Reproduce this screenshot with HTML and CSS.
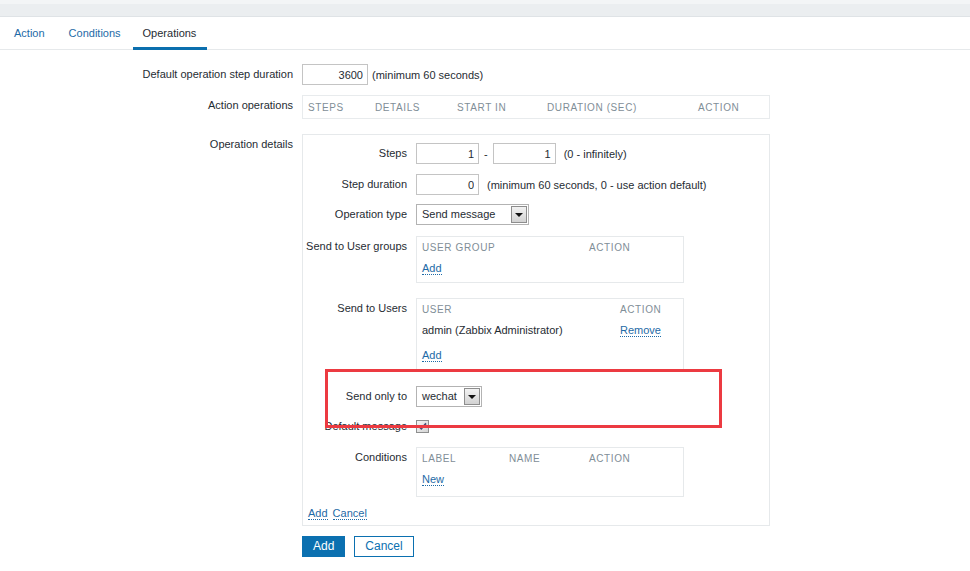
FILE: index.html
```html
<!DOCTYPE html>
<html>
<head>
<meta charset="utf-8">
<title>Operations</title>
<link rel="stylesheet" href="styles.css">
</head>
<body>
<div class="topbar"></div>
<div class="page">
  <ul class="tabs">
    <li class="tab">Action</li>
    <li class="tab">Conditions</li>
    <li class="tab active">Operations</li>
  </ul>

  <div class="form">
    <div class="frow">
      <div class="flabel">Default operation step duration</div>
      <div class="field">
        <input class="inp w66" type="text" value="3600">
        <span class="hint">(minimum 60 seconds)</span>
      </div>
    </div>

    <div class="frow mt10">
      <div class="flabel">Action operations</div>
      <div class="opsbox">
        <div class="thead cols-ops">
          <span>STEPS</span><span>DETAILS</span><span>START IN</span><span>DURATION (SEC)</span><span>ACTION</span>
        </div>
      </div>
    </div>

    <div class="frow mt15">
      <div class="flabel">Operation details</div>
      <div class="dbox">
        <div class="igrid">
          <div class="ilabel">Steps</div>
          <div class="field">
            <input class="inp w63" type="text" value="1"><span class="dash">-</span><input class="inp w63" type="text" value="1"><span class="hint in">(0 - infinitely)</span>
          </div>

          <div class="ilabel mt10">Step duration</div>
          <div class="field mt10">
            <input class="inp w63" type="text" value="0"><span class="hint in">(minimum 60 seconds, 0 - use action default)</span>
          </div>

          <div class="ilabel mt9">Operation type</div>
          <div class="field mt9">
            <div class="select w113"><span class="sel-text">Send message</span><span class="sel-btn"><span class="tri"></span></span></div>
          </div>

          <div class="ilabel mt11">Send to User groups</div>
          <div class="field mt11">
            <div class="ibox">
              <div class="thead cols-groups"><span>USER GROUP</span><span>ACTION</span></div>
              <div class="trow"><a class="lnk" href="#">Add</a></div>
            </div>
          </div>

          <div class="ilabel mt15">Send to Users</div>
          <div class="field mt15">
            <div class="ibox">
              <div class="thead cols-users"><span>USER</span><span>ACTION</span></div>
              <div class="trow data cols-users"><span>admin (Zabbix Administrator)</span><span><a class="lnk" href="#">Remove</a></span></div>
              <div class="trow"><a class="lnk" href="#">Add</a></div>
            </div>
          </div>

          <div class="ilabel mt16">Send only to</div>
          <div class="field mt16">
            <div class="select w66s"><span class="sel-text">wechat</span><span class="sel-btn"><span class="tri"></span></span></div>
          </div>

          <div class="ilabel mt9">Default message</div>
          <div class="field mt9">
            <svg class="chk" width="13" height="13" viewBox="0 0 13 13">
              <defs>
                <linearGradient id="cg" x1="0" y1="0" x2="1" y2="1">
                  <stop offset="0" stop-color="#f6f6f6"/>
                  <stop offset="1" stop-color="#d3d3d3"/>
                </linearGradient>
              </defs>
              <rect x="0.5" y="0.5" width="12" height="12" fill="url(#cg)" stroke="#8e8f8f"/>
              <path d="M3 6.3 L5.3 8.8 L10 3.4" fill="none" stroke="#4b4b73" stroke-width="1.7"/>
            </svg>
          </div>

          <div class="ilabel mt10">Conditions</div>
          <div class="field mt10">
            <div class="ibox tall">
              <div class="thead cols-cond"><span>LABEL</span><span>NAME</span><span>ACTION</span></div>
              <div class="trow"><a class="lnk" href="#">New</a></div>
            </div>
          </div>

          <div class="links mt6"><a class="lnk" href="#">Add</a><a class="lnk gap" href="#">Cancel</a></div>
        </div>
      </div>
    </div>

    <div class="frow mt10">
      <div></div>
      <div class="buttons">
        <button class="btn primary">Add</button>
        <button class="btn secondary">Cancel</button>
      </div>
    </div>
  </div>

  <div class="annot"></div>
</div>
</body>
</html>
```

FILE: styles.css
```css
html, body {
  margin: 0;
  padding: 0;
  background: #ffffff;
}
body {
  font-family: "Liberation Sans", Arial, sans-serif;
  font-size: 11px;
  color: #1f2c33;
  position: relative;
  height: 571px;
  overflow: hidden;
}

.topbar {
  height: 12px;
  background: #ebeef0;
  border-top: 4px solid #f3f5f6;
  border-bottom: 1px solid #dfe3e6;
}

.page {
  background: #ffffff;
}

.tabs {
  list-style: none;
  margin: 0;
  padding: 0 0 0 2px;
  display: flex;
  align-items: flex-start;
  height: 32px;
  border-bottom: 1px solid #e6e9eb;
}
.tab {
  box-sizing: border-box;
  height: 33px;
  margin-bottom: -1px;
  padding: 2px 12px 0;
  line-height: 29px;
  color: #1e6aa6;
  border-bottom: 3px solid transparent;
  font-size: 11px;
}
.tab.active {
  color: #1f2c33;
  border-bottom-color: #0b6fae;
  padding: 2px 11px 0 10px;
}

.form {
  padding-top: 14px;
}
.frow {
  display: grid;
  grid-template-columns: 293px 468px;
  column-gap: 9px;
  align-items: start;
}
.flabel {
  line-height: 21px;
  text-align: right;
  white-space: nowrap;
}
.mt6 { margin-top: 6px; }
.mt9 { margin-top: 9px; }
.mt10 { margin-top: 10px; }
.mt11 { margin-top: 11px; }
.mt15 { margin-top: 15px; }
.mt16 { margin-top: 16px; }

.field {
  display: flex;
  align-items: center;
  min-height: 21px;
  white-space: nowrap;
}

.inp {
  box-sizing: border-box;
  height: 21px;
  border: 1px solid #c4c4c4;
  padding: 0 4px 0 2px;
  margin: 0;
  font-family: "Liberation Sans", Arial, sans-serif;
  font-size: 11px;
  color: #1f2c33;
  text-align: right;
  background: #fff;
  outline: none;
}
.w66 { width: 66px; }
.w63 { width: 63px; }

.hint { margin-left: 4px; }
.hint.in { margin-left: 8px; }
.dash { margin: 0 5px; }

.opsbox {
  box-sizing: border-box;
  border: 1px solid #e8ebed;
  padding: 2px 5px 0;
}
.thead {
  display: grid;
  line-height: 20px;
  height: 20px;
  font-size: 10px;
  letter-spacing: 0.6px;
  color: #7f8e97;
  white-space: nowrap;
}
.cols-ops { grid-template-columns: 67px 82px 90px 151px auto; }
.cols-groups { grid-template-columns: 167px auto; }
.cols-users { grid-template-columns: 198px auto; }
.cols-cond { grid-template-columns: 87px 80px auto; }

.dbox {
  box-sizing: border-box;
  border: 1px solid #e6e9eb;
  padding: 8px 5px 1px 5px;
}
.igrid {
  display: grid;
  grid-template-columns: 99px 1fr;
  column-gap: 9px;
  align-items: start;
}
.ilabel {
  line-height: 21px;
  display: flex;
  justify-content: flex-end;
  white-space: nowrap;
}

.ibox {
  box-sizing: border-box;
  width: 268px;
  border: 1px solid #e6e9eb;
  padding: 1px 5px 4px 5px;
}
.ibox.tall { padding-bottom: 7px; }
.trow {
  line-height: 20px;
  height: 20px;
  white-space: nowrap;
}
.trow.data {
  display: grid;
  height: 25px;
}

.lnk {
  color: #1e6aa6;
  text-decoration: none;
  border-bottom: 1px dotted #1e6aa6;
}
.links {
  grid-column: 1 / -1;
  line-height: 21px;
  height: 21px;
}
.lnk.gap { margin-left: 5px; }

.select {
  box-sizing: border-box;
  display: flex;
  height: 21px;
  border: 1px solid #b3b3b3;
  padding: 1px;
  background: #fff;
}
.w113 { width: 113px; }
.w66s { width: 66px; }
.sel-text {
  flex: 1;
  padding-left: 4px;
  line-height: 17px;
  font-size: 11px;
}
.sel-btn {
  box-sizing: border-box;
  width: 16px;
  height: 17px;
  border: 1px solid #8d8d8d;
  background: linear-gradient(#f2f2f2, #d2d2d2);
  display: flex;
  align-items: center;
  justify-content: center;
}
.tri {
  width: 0;
  height: 0;
  border-left: 4px solid transparent;
  border-right: 4px solid transparent;
  border-top: 4px solid #111;
}

.chk { display: block; }

.buttons {
  display: flex;
  gap: 9px;
}
.btn {
  box-sizing: border-box;
  height: 21px;
  padding: 0 10px;
  font-family: "Liberation Sans", Arial, sans-serif;
  font-size: 12px;
  line-height: 19px;
  border: 1px solid #0b70b0;
  border-radius: 0;
  margin: 0;
}
.btn.primary {
  background: #0b70b0;
  color: #ffffff;
}
.btn.secondary {
  background: #ffffff;
  color: #0b70b0;
  padding: 0 10px;
}

.annot {
  position: absolute;
  left: 325px;
  top: 369px;
  width: 397px;
  height: 59px;
  box-sizing: border-box;
  border: 3px solid #ec3a41;
  pointer-events: none;
}
```
